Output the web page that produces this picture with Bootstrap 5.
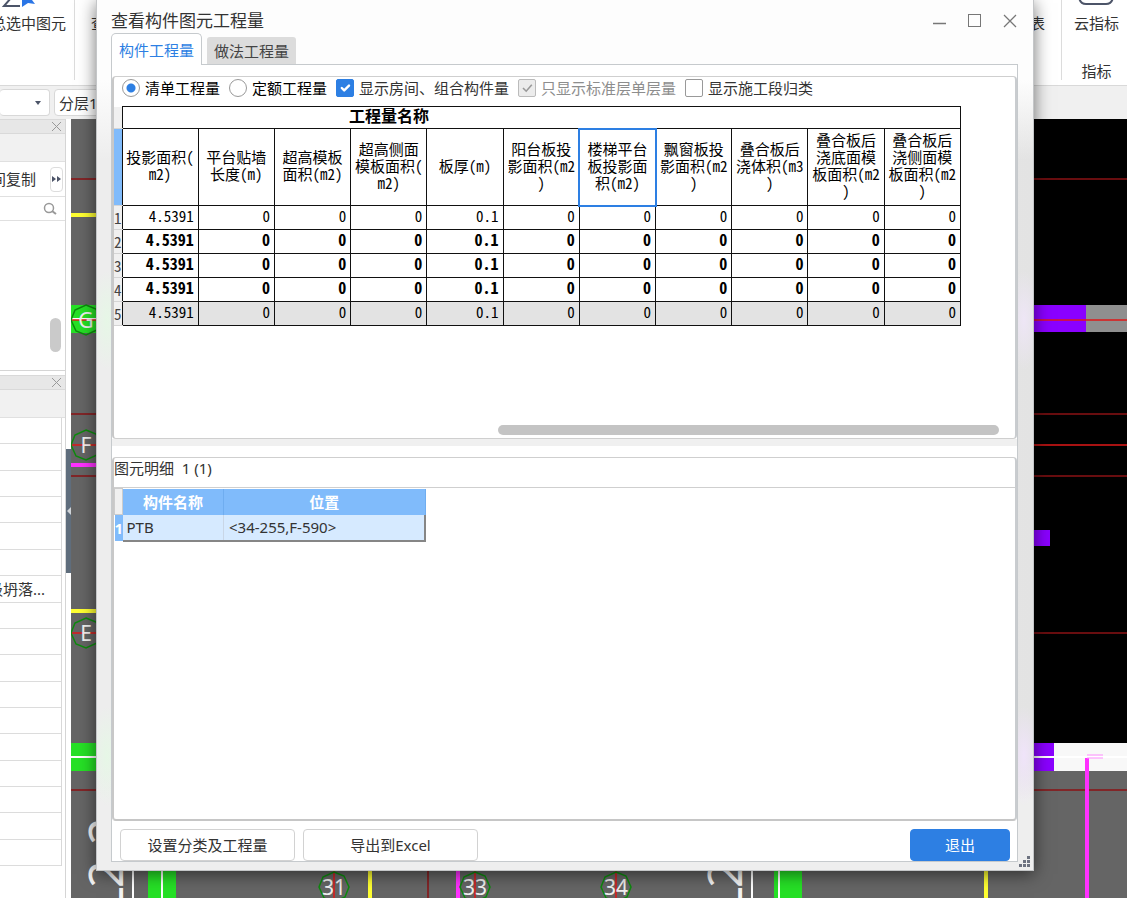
<!DOCTYPE html>
<html lang="zh-CN">
<head>
<meta charset="utf-8">
<meta name="viewport" content="width=device-width, initial-scale=1">
<title>查看构件图元工程量</title>
<link rel="stylesheet" href="https://cdn.jsdelivr.net/npm/bootstrap@5.3.0/dist/css/bootstrap.min.css">
<style>
  body { font-family: "Noto Sans", "Noto Sans CJK SC", sans-serif; font-size: 15px; line-height: 20px; color: #333; }
  /* ribbon and toolbar */
  .ribbon { height: 86px; border-bottom: 1px solid #d9d9d9; background: #fff; }
  .ribbon-sep { width: 1px; height: 80px; background: #dcdcdc; }
  .ribbon-left { width: 66px; }
  .ribbon-item { padding-top: 13px; }
  .toolstrip { height: 33px; background: #f0f0f0; }
  .combo { height: 27px; border: 1px solid #d8d8d8; border-radius: 4px; background: #fff; }
  select.combo { appearance: none; color: #333; padding: 0 4px; line-height: 20px; }
  /* sidebar */
  .side { width: 66px; border-right: 1px solid #d5d5d5; background: #fff; }
  .side-head { height: 15px; background: #e7e7e7; border: solid #d9d9d9; border-width: 1px 0; }
  .side-sub { height: 28px; background: #f1f1f1; border-bottom: 1px solid #e0e0e0; }
  .side-tools { height: 35px; border-bottom: 1px solid #e0e0e0; }
  .side-search { height: 24px; border-bottom: 1px solid #e0e0e0; }
  .side-list { height: 150px; border-bottom: 1px solid #d5d5d5; }
  .side-thumb { width: 11px; height: 34px; border-radius: 6px; background: #cacaca; margin: 0 4px 18px 0; }
  .side-more { width: 13px; height: 25px; border: 1px solid #ddd; border-radius: 4px; background: #fff; margin: 0 2px 0 14px; }
  .side-grid { margin: 0 3px 32px 0; border-right: 1px solid #d8d8d8; }
  .side-grid > div { border-bottom: 1px solid #dcdcdc; flex: 1 1 0; min-height: 0; }
  .grip { width: 5px; background: #fff; padding-top: 5px; }
  .grip button { width: 5px; height: 124px; background: #5f6d7c; }
  .canvas-area { background: #656565; }
  /* dialog */
  .dlg { left: 96px; right: 93px; top: 0; bottom: 27px; padding: 0 15px 8px 14px; border: 1px solid #c4c6c8; border-width: 0 1px 1px 1px;
    box-shadow: 0 3px 16px rgba(0,0,0,.55);
    background:
      radial-gradient(ellipse 16px 50px at 10px 320px, #e6f7e6, transparent),
      radial-gradient(ellipse 16px 50px at 10px 756px, #e6f7e6, transparent),
      radial-gradient(ellipse 16px 50px at 927px 320px, #eee6f6, transparent),
      radial-gradient(ellipse 16px 50px at 927px 756px, #f0e4fa, transparent),
      linear-gradient(#fdfdfd 80px, rgba(253,253,253,0) 160px),
      linear-gradient(rgba(238,238,238,0) 760px, #eee 800px),
      linear-gradient(90deg, #ededed 50%, #e3e3e3); }
  .dlg-title { height: 33px; font-size: 17px; }
  .win-btns { margin-right: -9px; }
  .win-btn { width: 35px; height: 24px; }
  .dlg-tabs { height: 31px; gap: 5px; border: 0; }
  .dlg-tabs .nav-link { height: 27px; padding: 0 7px; background: #dcdcdc; border: 0; border-radius: 3px 3px 0 0; color: #444; line-height: 26px; margin: 0; }
  .dlg-tabs .nav-link.active { height: 32px; background: #fff; border: 1px solid #c6cacd; border-bottom: 0; border-radius: 5px 5px 0 0; color: #2d7fe3; line-height: 30px; position: relative; z-index: 1; margin-bottom: -1px; }
  .dlg-pane { border: 1px solid #c6cacd; background: #fff; padding-top: 11px; min-height: 0; }
  .group { border: 1px solid #cfcfcf; border-left: 2px solid #c8c8c8; border-right: 2px solid #c9cccf; border-radius: 4px; flex: 1 1 0; min-height: 0; }
  .group-detail { border-bottom: 2px solid #c6c6c6; }
  .options { height: 29px; gap: 9px; padding: 0 0 8px 8px; }
  .options .form-check { min-height: 0; gap: 5px; }
  .options .form-check-input { width: 18px; height: 18px; border: 1px solid #999; box-shadow: none; }
  .options .form-check-input[type=checkbox] { border-radius: 2px; }
  .options .form-check-input:checked[type=checkbox] { background-color: #2d7fe3; border-color: #2d7fe3; }
  .options .form-check-input[type=radio]:checked { background: radial-gradient(circle, #2d7fe3 4px, #fff 5px); }
  .options .form-check-input:disabled, .options .form-check-input:disabled ~ .form-check-label { opacity: 1; }
  .options .form-check-input:disabled:checked[type=checkbox] { background-color: #ececec; border-color: #bbb;
    background-image: url("data:image/svg+xml,%3csvg xmlns='http://www.w3.org/2000/svg' viewBox='0 0 20 20'%3e%3cpath fill='none' stroke='%23999' stroke-width='2' d='m5 10 4 4 7-8'/%3e%3c/svg%3e"); }
  .options .form-check-input:disabled ~ .form-check-label { color: #8d8d8d; }
  /* quantity table */
  .qty { width: 847px; table-layout: fixed; border-collapse: collapse; color: #000; font-family: "Noto Sans CJK SC", sans-serif; font-feature-settings: "hwid"; font-size: 15px; line-height: 17px; }
  .qty .gut { width: 8px; }
  .qty td, .qty thead th { border: 1px solid #111; padding: 0; }
  .qty thead th { font-weight: 400; text-align: center; vertical-align: middle; height: 77px; padding-bottom: 4px; }
  .qty thead tr:first-child th { height: 22px; font-weight: 700; font-size: 16px; }
  .qty tbody tr { height: 24px; }
  .qty td { text-align: right; padding: 0 4px 4px 0; }
  .qty .heavy td { font-weight: 700; font-size: 16px; }
  .qty .total td { background: #e3e3e3; }
  .qty .rownum, .qty thead th.rownum { border: solid #d5d5d5; border-width: 0 0 1px; background: #f0f0f0; color: #444; font-weight: 400; font-size: 15px; text-align: center; padding: 0; vertical-align: middle; }
  .qty thead th.rownum.current { background: #80bbfb; }
  .qty thead th.picked { outline: 2px solid #2d7fe3; outline-offset: -1px; }
  .hthumb { width: 501px; max-width: 56%; height: 10px; border-radius: 5px; background: #c4c4c4; margin: 0 16px 3px auto; }
  .splitter { height: 7px; background: #f0f0f0; margin-bottom: 11px; }
  /* detail table */
  .detail-label { height: 30px; border-bottom: 1px solid #cfcfcf; white-space: pre; }
  .detail { width: 312px; table-layout: fixed; border-collapse: collapse; }
  .detail th, .detail td { padding: 0 4px; height: 26px; }
  .detail thead th { background: #80bbfb; color: #fff; text-align: center; border-right: 1px solid #6fadf0; }
  .detail thead th:first-child { background: #f0f0f0; border: 1px solid #ccc; }
  .detail tbody th { background: #80bbfb; color: #fff; padding: 0; text-align: center; }
  .detail tbody td { background: #d6eaff; border-bottom: 2px solid #868686; }
  .detail tbody td:last-child { border-right: 2px solid #868686; border-left: 1px solid #c9d6e6; padding-left: 5px; }
  .dlg-foot { gap: 8px; padding: 0 7px 0 8px; margin-top: 8px; }
  .dlg-foot .btn { height: 32px; width: 175px; padding: 0; font-size: 15px; line-height: 20px; border-radius: 4px; border: 1px solid #d2d2d2; background: #fff; color: #333; }
  .dlg-foot .btn.quit { width: 100px; background: #2d7fe3; border-color: #2d7fe3; color: #fff; }
  .size-grip { right: 3px; bottom: 3px; }
</style>
</head>
<body class="overflow-hidden">
<div class="vh-100 d-flex flex-column position-relative overflow-hidden">
  <header class="ribbon d-flex justify-content-between flex-shrink-0">
    <div class="d-flex">
      <div class="ribbon-left position-relative d-flex justify-content-end overflow-hidden">
        <svg class="position-absolute top-0 start-0" width="40" height="9" viewBox="0 0 40 9" aria-hidden="true"><path d="M11-2 4 6h16" fill="none" stroke="#4c5468" stroke-width="2"/><path d="M22 0v7l6-4 7 1-3-4z" fill="#2a75e6"/></svg>
        <span class="ribbon-item text-nowrap flex-shrink-0">总选中图元</span>
      </div>
      <div class="ribbon-sep ms-2 me-3 ps-0"></div>
      <span class="ribbon-item">查</span>
    </div>
    <div class="d-flex">
      <span class="ribbon-item me-3">表</span>
      <div class="ribbon-sep"></div>
      <div class="position-relative text-center d-flex flex-column px-2 ms-1">
        <svg class="position-absolute top-0 start-50 translate-middle-x" width="40" height="6" viewBox="0 0 40 6" aria-hidden="true"><path d="M3-5Q3 4 10 4h20Q37 4 37-5" fill="none" stroke="#4c5468" stroke-width="2"/></svg>
        <span class="ribbon-item">云指标</span>
        <span class="mt-auto mb-1">指标</span>
      </div>
    </div>
  </header>
  <div class="toolstrip d-flex align-items-center gap-1 flex-shrink-0">
    <button type="button" class="combo border-start-0 p-0 pe-2 d-flex align-items-center justify-content-end" style="width:50px" aria-label="楼层"><svg width="6" height="4" aria-hidden="true"><path d="M0 0h6L3 4z" fill="#4c5468"/></svg></button>
    <select class="combo" aria-label="分层"><option>分层1</option></select>
  </div>

  <main class="d-flex flex-fill overflow-hidden">
    <aside class="side d-flex flex-column flex-shrink-0">
      <div class="side-head d-flex justify-content-end align-items-center pe-1 flex-shrink-0"><svg width="9" height="9" aria-hidden="true"><path d="m0 0 9 9M9 0 0 9" stroke="#999"/></svg></div>
      <div class="side-sub flex-shrink-0"></div>
      <div class="side-tools d-flex justify-content-end align-items-center flex-shrink-0 overflow-hidden">
        <span class="text-nowrap flex-shrink-0">间复制</span>
        <button type="button" class="side-more p-0 flex-shrink-0 d-flex align-items-center justify-content-center" aria-label="更多"><svg width="9" height="6" aria-hidden="true"><path d="m0 0 4 3-4 3zM5 0l4 3-4 3z" fill="#4c5468"/></svg></button>
      </div>
      <div class="side-search d-flex justify-content-end align-items-center pe-2 flex-shrink-0"><svg width="14" height="14" aria-hidden="true"><circle cx="6" cy="6" r="4.500" fill="none" stroke="#999" stroke-width="1.500"/><path d="m9 9 4 3" stroke="#999" stroke-width="2"/></svg></div>
      <div class="side-list d-flex justify-content-end align-items-end flex-shrink-0"><div class="side-thumb"></div></div>
      <div class="side-head mt-1 d-flex justify-content-end align-items-center pe-1 flex-shrink-0"><svg width="9" height="9" aria-hidden="true"><path d="m0 0 9 9M9 0 0 9" stroke="#999"/></svg></div>
      <div class="side-sub flex-shrink-0"></div>
      <div class="side-grid flex-fill d-flex flex-column">
        <div></div><div></div><div></div><div></div><div></div><div></div>
        <div class="d-flex justify-content-end align-items-center overflow-hidden pe-3 text-nowrap"><span class="flex-shrink-0">级坍落...</span></div>
        <div></div><div></div><div></div><div></div><div></div>
        <div></div><div></div><div></div><div></div><div></div>
      </div>
    </aside>
    <div class="grip d-flex align-items-center flex-shrink-0">
      <button type="button" class="border-0 p-0 d-flex align-items-center" aria-label="折叠"><svg width="5" height="8" aria-hidden="true"><path d="M5 0v8L1 4z" fill="#d0d4d8"/></svg></button>
    </div>
    <div class="canvas-area flex-fill overflow-hidden">
      <!-- floor plan: axis lines, beams and axis markers -->
      <svg class="w-100 h-100 d-block" viewBox="71 119 1056 779" preserveAspectRatio="xMinYMin slice" font-family="Noto Sans, sans-serif">
        <rect x="1000" y="119" width="127" height="652" fill="#000"/>
        <g fill="#26e026"><rect x="71" y="305" width="60" height="28"/><rect x="71" y="743" width="60" height="28"/><rect x="148" y="800" width="28" height="98"/><rect x="774" y="800" width="28" height="98"/></g>
        <g fill="#8a00ff"><rect x="1000" y="305" width="86" height="27"/><rect x="1000" y="530" width="50" height="16"/><rect x="1000" y="743" width="54" height="28"/></g>
        <rect x="1086" y="305" width="41" height="27" fill="#8f8f8f"/>
        <rect x="1054" y="743" width="73" height="28" fill="#f8f8f8"/>
        <path d="M71 319h60M71 757h1056M133 800v98M162 800v98M752 800v98M779 800v98" stroke="#fff" stroke-width="2"/>
        <path d="M71 179h1056M71 414h1056M71 476h1056M71 790h1056M1000 633h127M428 800v98" stroke="#8b1214" stroke-width="1.500"/>
        <path d="M71 320h1056M71 445h1056M71 633h60M334 870v28M475 870v28M616 870v28" stroke="#e01818" stroke-width="1.500"/>
        <path d="M71 215h60M71 611h60M370 800v98M986 800v98" stroke="#ffff32" stroke-width="4"/>
        <path d="M71 465h60M458 800v98M1087 758v140" stroke="#ff30ff" stroke-width="4"/>
        <path d="M1087 755h16M1087 758h16" stroke="#ff8cff" stroke-width="1"/>
        <g fill="none" stroke="#0d8a0d" stroke-width="1.500">
          <path id="ring" d="M86 305l10 4 5 11-4 10-11 5-10-4-5-11 4-10z"/>
          <use href="#ring" y="125"/><use href="#ring" y="313"/>
          <use href="#ring" x="248" y="567"/><use href="#ring" x="389" y="567"/><use href="#ring" x="530" y="567"/>
        </g>
        <g fill="#f0f0f0" font-size="21" text-anchor="middle">
          <text x="86" y="328">G</text><text x="86" y="453">F</text><text x="86" y="641">E</text>
          <text x="334" y="895">31</text><text x="475" y="895">33</text><text x="616" y="895">34</text>
        </g>
        <g fill="#f4f4f4" font-size="48">
          <text transform="translate(123 845) rotate(-90)">2</text>
          <text transform="translate(123 912) rotate(-90)">L</text>
          <text transform="translate(123 888) rotate(-90)">2</text>
          <text transform="translate(742 912) rotate(-90)">L</text>
          <text transform="translate(742 888) rotate(-90)">2</text>
        </g>
      </svg>
    </div>
  </main>

  <section class="dlg position-absolute d-flex flex-column" role="dialog" aria-labelledby="dlgTitle">
    <div class="dlg-title d-flex align-items-center flex-shrink-0 pt-2">
      <span id="dlgTitle" class="me-auto">查看构件图元工程量</span>
      <div class="win-btns d-flex">
        <button type="button" class="win-btn btn p-0 border-0 d-flex align-items-center justify-content-center" aria-label="最小化"><svg width="13" height="13"><path d="M0 9.500h13" stroke="#777" stroke-width="1.500"/></svg></button>
        <button type="button" class="win-btn btn p-0 border-0 d-flex align-items-center justify-content-center" aria-label="最大化"><svg width="13" height="13"><rect x=".5" y=".5" width="12" height="12" fill="none" stroke="#777"/></svg></button>
        <button type="button" class="win-btn btn p-0 border-0 d-flex align-items-center justify-content-center" aria-label="关闭"><svg width="14" height="14"><path d="m1 1 12 12M13 1 1 13" stroke="#777" stroke-width="1.250"/></svg></button>
      </div>
    </div>
    <div class="dlg-tabs nav nav-tabs align-items-end flex-shrink-0" role="tablist">
      <button type="button" class="nav-link active" role="tab" aria-selected="true">构件工程量</button>
      <button type="button" class="nav-link" role="tab" aria-selected="false">做法工程量</button>
    </div>
    <div class="dlg-pane flex-fill d-flex flex-column">
      <div class="group d-flex flex-column">
        <div class="options d-flex align-items-center flex-shrink-0 text-nowrap">
          <div class="form-check p-0 m-0 d-flex align-items-center"><input class="form-check-input m-0" type="radio" name="kind" id="k1" checked><label class="form-check-label text-black" for="k1">清单工程量</label></div>
          <div class="form-check p-0 m-0 d-flex align-items-center"><input class="form-check-input m-0" type="radio" name="kind" id="k2"><label class="form-check-label text-black" for="k2">定额工程量</label></div>
          <div class="form-check p-0 m-0 d-flex align-items-center"><input class="form-check-input m-0" type="checkbox" id="c1" checked><label class="form-check-label" for="c1">显示房间、组合构件量</label></div>
          <div class="form-check p-0 m-0 d-flex align-items-center"><input class="form-check-input m-0" type="checkbox" id="c2" checked disabled><label class="form-check-label" for="c2">只显示标准层单层量</label></div>
          <div class="form-check p-0 m-0 d-flex align-items-center"><input class="form-check-input m-0" type="checkbox" id="c3"><label class="form-check-label" for="c3">显示施工段归类</label></div>
        </div>
        <div class="flex-fill overflow-hidden">
          <table class="qty">
            <colgroup><col class="gut"><col span="11"></colgroup>
            <thead>
              <tr><th class="rownum"></th><th colspan="7" class="border-end-0">工程量名称</th><th colspan="4" class="border-start-0"></th></tr>
              <tr><th class="rownum current"></th><th>投影面积(<br>m2)</th><th>平台贴墙<br>长度(m)</th><th>超高模板<br>面积(m2)</th><th>超高侧面<br>模板面积(<br>m2)</th><th>板厚(m)</th><th>阳台板投<br>影面积(m2<br>)</th><th class="picked">楼梯平台<br>板投影面<br>积(m2)</th><th>飘窗板投<br>影面积(m2<br>)</th><th>叠合板后<br>浇体积(m3<br>)</th><th>叠合板后<br>浇底面模<br>板面积(m2<br>)</th><th>叠合板后<br>浇侧面模<br>板面积(m2<br>)</th></tr>
            </thead>
            <tbody>
              <tr><th class="rownum">1</th><td>4.5391</td><td>0</td><td>0</td><td>0</td><td>0.1</td><td>0</td><td>0</td><td>0</td><td>0</td><td>0</td><td>0</td></tr>
              <tr class="heavy"><th class="rownum">2</th><td>4.5391</td><td>0</td><td>0</td><td>0</td><td>0.1</td><td>0</td><td>0</td><td>0</td><td>0</td><td>0</td><td>0</td></tr>
              <tr class="heavy"><th class="rownum">3</th><td>4.5391</td><td>0</td><td>0</td><td>0</td><td>0.1</td><td>0</td><td>0</td><td>0</td><td>0</td><td>0</td><td>0</td></tr>
              <tr class="heavy"><th class="rownum">4</th><td>4.5391</td><td>0</td><td>0</td><td>0</td><td>0.1</td><td>0</td><td>0</td><td>0</td><td>0</td><td>0</td><td>0</td></tr>
              <tr class="total"><th class="rownum">5</th><td>4.5391</td><td>0</td><td>0</td><td>0</td><td>0.1</td><td>0</td><td>0</td><td>0</td><td>0</td><td>0</td><td>0</td></tr>
            </tbody>
          </table>
        </div>
        <div class="hthumb flex-shrink-0"></div>
      </div>
      <div class="splitter flex-shrink-0"></div>
      <div class="group group-detail">
        <div class="detail-label">图元明细  1 (1)</div>
        <table class="detail">
          <colgroup><col style="width:8px"><col style="width:101px"><col></colgroup>
          <thead><tr><th class="p-0"></th><th>构件名称</th><th>位置</th></tr></thead>
          <tbody><tr><th>1</th><td>PTB</td><td>&lt;34-255,F-590&gt;</td></tr></tbody>
        </table>
      </div>
      <div class="dlg-foot d-flex flex-shrink-0">
        <button type="button" class="btn">设置分类及工程量</button>
        <button type="button" class="btn">导出到Excel</button>
        <button type="button" class="btn quit ms-auto">退出</button>
      </div>
    </div>
    <svg class="size-grip position-absolute" width="11" height="11" aria-hidden="true"><path d="M8 0h3v3H8zM4 4h3v3H4zM8 4h3v3H8zM0 8h3v3H0zM4 8h3v3H4zM8 8h3v3H8z" fill="#6d7280"/></svg>
  </section>
</div>
<script src="https://cdn.jsdelivr.net/npm/bootstrap@5.3.0/dist/js/bootstrap.bundle.min.js"></script>
</body>
</html>
